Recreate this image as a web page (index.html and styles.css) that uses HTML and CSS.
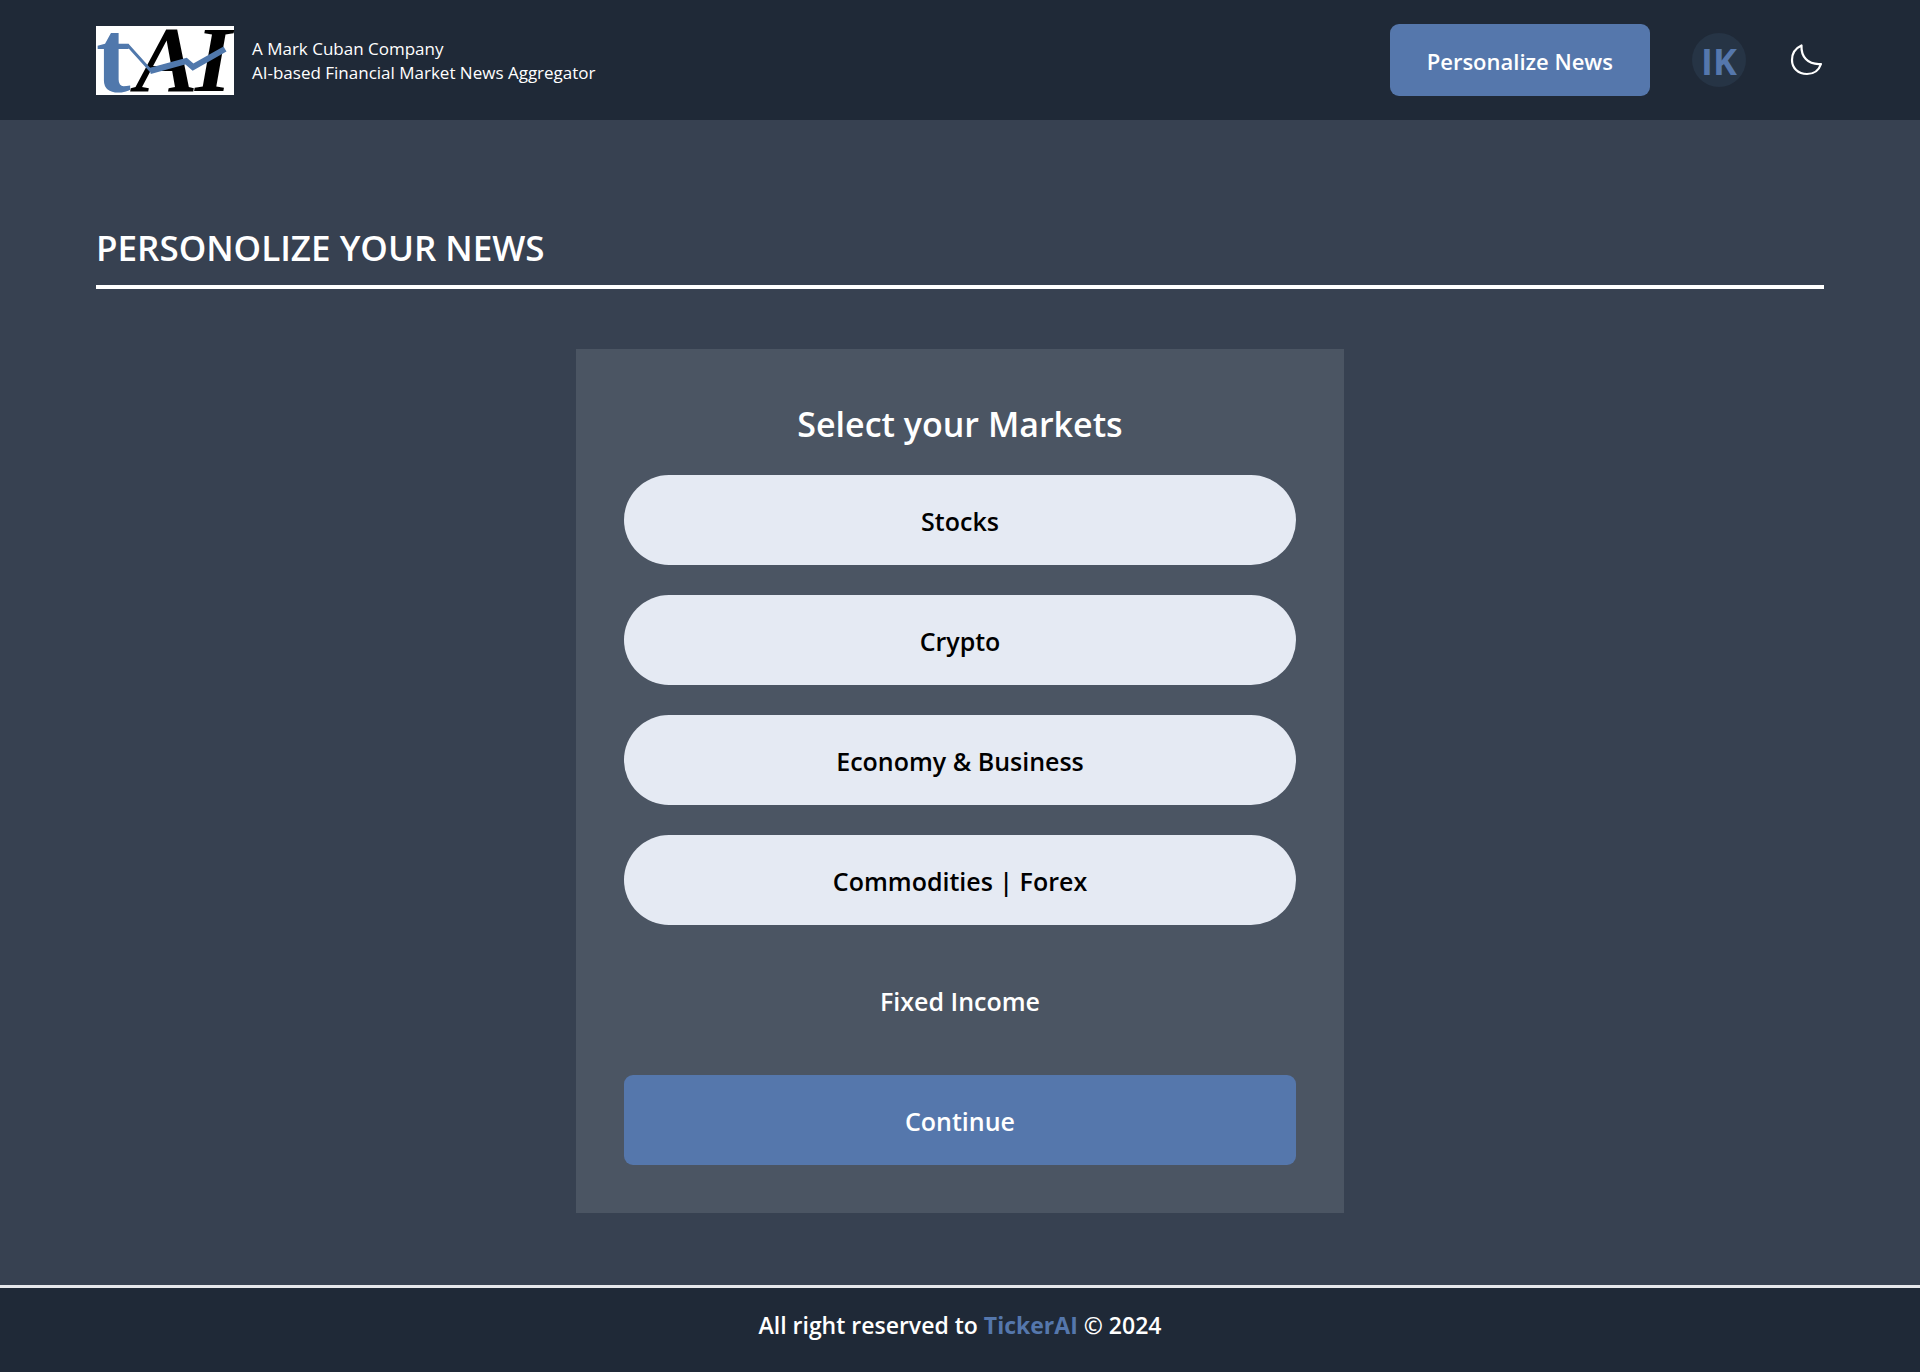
FILE: index.html
```html
<!DOCTYPE html>
<html lang="en">
<head>
<meta charset="utf-8">
<meta name="viewport" content="width=device-width, initial-scale=1">
<title>TickerAI</title>
<link rel="stylesheet" href="styles.css">
</head>
<body>
<header class="header">
  <a class="brand" href="#">
    <svg class="logo" viewBox="0 0 138 69" role="img" aria-label="TickerAI logo">
      <rect width="138" height="69" fill="#fff"/>
      <text class="logo-t" x="0" y="65">t</text>
      <text class="logo-ai" x="39" y="65">A</text>
      <text class="logo-ai" x="99" y="65">I</text>
      <path d="M20 19.500H32L55 45" fill="none" stroke="#5078ac" stroke-width="3"/>
      <path d="M54 45L90 35L97 41L129 23" fill="none" stroke="#5078ac" stroke-width="6"/>
    </svg>
    <span class="tagline">A Mark Cuban Company<br>AI-based Financial Market News Aggregator</span>
  </a>
  <nav class="actions">
    <button class="btn btn-nav" type="button">Personalize News</button>
    <button class="avatar" type="button">IK</button>
    <button class="theme" type="button" aria-label="Toggle dark mode">
      <svg class="moon" viewBox="0 0 36 36" aria-hidden="true">
        <path d="M13.500 3.500C13 14 19 23 33 22C31 28 26 32 19 32C10 32 4 26 4 18C4 11 8 6 13.500 3.500Z" fill="none" stroke="#fff" stroke-width="2.200" stroke-linejoin="round"/>
      </svg>
    </button>
  </nav>
</header>
<main class="main">
  <h1 class="page-title">PERSONOLIZE YOUR NEWS</h1>
  <section class="panel">
    <h2 class="panel-title">Select your Markets</h2>
    <div class="options">
      <button class="option selected" type="button">Stocks</button>
      <button class="option selected" type="button">Crypto</button>
      <button class="option selected" type="button">Economy &amp; Business</button>
      <button class="option selected" type="button">Commodities | Forex</button>
      <button class="option" type="button">Fixed Income</button>
      <button class="btn btn-continue" type="button">Continue</button>
    </div>
  </section>
</main>
<footer class="footer">
  <p class="copyright">All right reserved to <a class="footer-link" href="#">TickerAI</a> © 2024</p>
</footer>
</body>
</html>
```
FILE: styles.css
```css
* {
  box-sizing: border-box;
  margin: 0;
}

body {
  min-height: 100vh;
  display: flex;
  flex-direction: column;
  background: #374151;
  color: #fff;
  font-family: "Open Sans", "Noto Sans", sans-serif;
}

button {
  border: 0;
  padding: 2px 0 0;
  background: none;
  color: inherit;
  font: inherit;
  cursor: pointer;
}

a {
  color: inherit;
  text-decoration: none;
}

.header {
  display: flex;
  align-items: center;
  justify-content: space-between;
  padding: 24px 96px;
  background: #1f2937;
}

.brand {
  display: flex;
  align-items: center;
  gap: 18px;
}

.logo {
  width: 138px;
  height: 69px;
  overflow: visible;
}

.logo-t,
.logo-ai {
  font-family: "Liberation Serif", serif;
  font-weight: 700;
}

.logo-t {
  font-size: 104px;
  fill: #5078ac;
}

.logo-ai {
  font-size: 94px;
  font-style: italic;
  fill: #000;
}

.tagline {
  padding-top: 2px;
  font-size: 17px;
  line-height: 24px;
}

.actions {
  display: flex;
  align-items: center;
  gap: 42px;
}

.btn {
  border-radius: 9px;
  background: #5577ac;
  font-weight: 600;
}

.btn-nav {
  height: 72px;
  padding: 2px 37px 0;
  font-size: 22px;
}

.avatar {
  width: 54px;
  height: 54px;
  border-radius: 50%;
  background: #263445;
  color: #5577ac;
  font-size: 36px;
  font-weight: 700;
  line-height: 54px;
}

.theme,
.moon {
  display: block;
  width: 36px;
  height: 36px;
  padding: 0;
}

.main {
  flex: 1;
  padding: 96px 96px 72px;
}

.page-title {
  padding: 5px 0 10px;
  border-bottom: 4px solid #fff;
  font-size: 35px;
  font-weight: 600;
  line-height: 54px;
}

.panel {
  width: 768px;
  max-width: 100%;
  margin: 60px auto 0;
  padding: 48px;
  background: #4b5563;
}

.panel-title {
  margin-bottom: 24px;
  font-size: 34px;
  font-weight: 600;
  line-height: 54px;
  text-align: center;
}

.options {
  display: grid;
  gap: 30px;
}

.option,
.btn-continue {
  height: 90px;
  font-size: 25px;
  font-weight: 600;
}

.option {
  border-radius: 45px;
}

.selected {
  background: #e5eaf3;
  color: #000;
}

.footer {
  padding: 19px 96px 29px;
  border-top: 3px solid #e5e7eb;
  background: #1f2937;
  text-align: center;
}

.copyright {
  font-size: 23px;
  font-weight: 600;
  line-height: 36px;
}

.footer-link {
  color: #5577ac;
  font-weight: 700;
}
```
